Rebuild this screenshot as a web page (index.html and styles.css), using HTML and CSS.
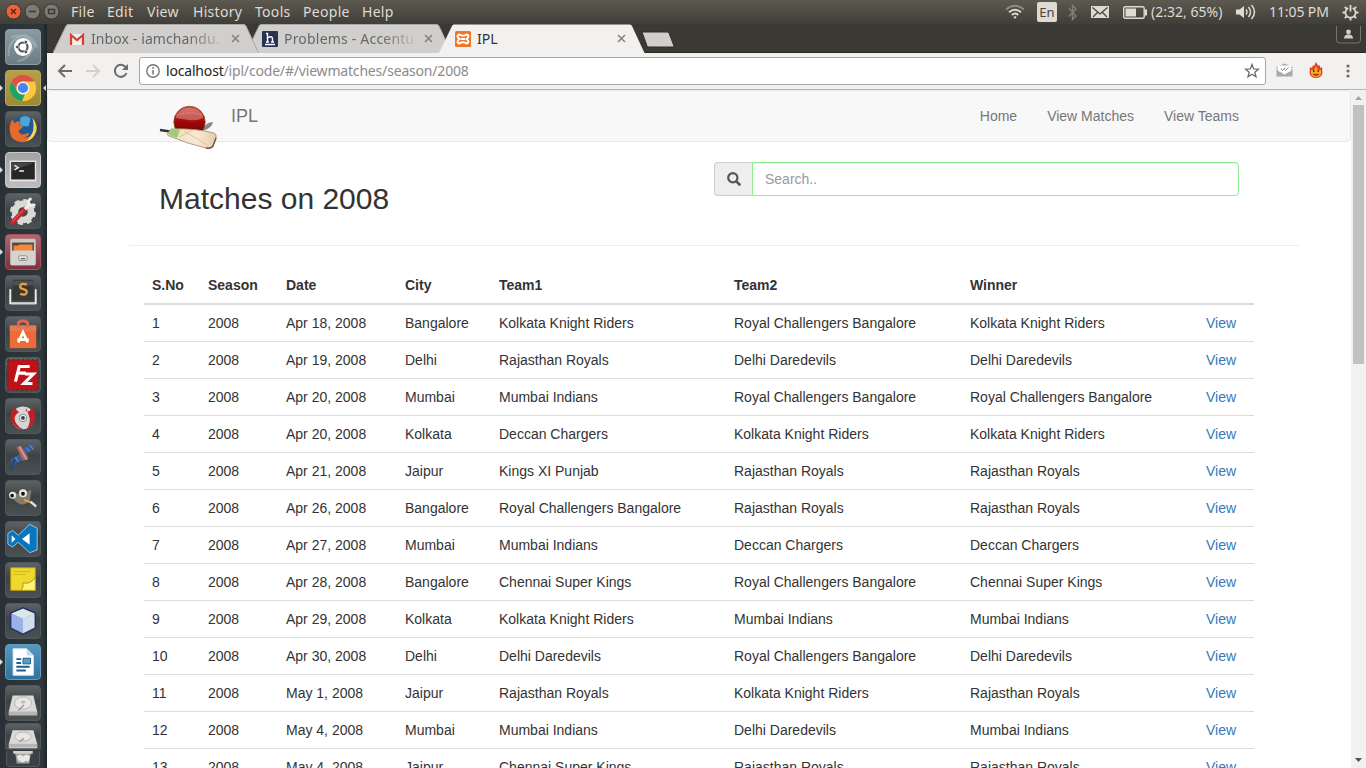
FILE: index.html
```html
<!DOCTYPE html>
<html lang="en">
<head>
<meta charset="utf-8">
<title>IPL</title>
<link rel="stylesheet" href="styles.css">
</head>
<body>
<div class="desktop">
<header class="panel">
  <div class="window-buttons">
    <svg width="62" height="24" viewBox="0 0 62 24"><circle cx="13.500" cy="11.500" r="7.500" fill="#ee6237" stroke="#3b3934"/><path d="M11 9l5 5m0-5l-5 5" stroke="#632713" stroke-width="1.500"/><g fill="#7d7a71" stroke="#3b3934"><circle cx="32.500" cy="11.500" r="7.500"/><circle cx="51.500" cy="11.500" r="7.500"/></g><path d="M29 11.500h7" stroke="#3b3934" stroke-width="1.500"/><path d="M48.500 9.500h6v4h-6z" fill="none" stroke="#3b3934" stroke-width="1.400"/></svg>
  </div>
  <nav class="menus"><span>File</span><span>Edit</span><span>View</span><span>History</span><span>Tools</span><span>People</span><span>Help</span></nav>
  <div class="indicators">
    <svg width="20" height="16" viewBox="0 0 20 16" fill="none" stroke-width="1.900"><path d="M1 5.500Q10-2 19 5.500" stroke="#8f8c84"/><path d="M4 8.300Q10 3 16 8.300M6.800 11Q10 8 13.200 11" stroke="#dfdbd2"/><path d="M8.300 13l1.700 2 1.700-2q-1.700-1.500-3.400 0z" fill="#dfdbd2" stroke="none"/></svg>
    <span class="lang">En</span>
    <svg class="bluetooth" width="10" height="17" viewBox="0 0 10 17" fill="none" stroke="#827f77" stroke-width="1.400"><path d="M1 4.500l7 7.500-3.500 3.500v-14L8 5l-7 7.500"/></svg>
    <svg width="18" height="14" viewBox="0 0 18 14"><path d="M0 1h18v12H0z" fill="#dfdbd2"/><path d="M1.500 2.500L9 9l7.500-6.500M2 12l5-5m9 5l-5-5" fill="none" stroke="#46443e" stroke-width="1.300"/></svg>
    <svg width="24" height="13" viewBox="0 0 24 13"><rect x=".7" y=".7" width="20.500" height="11.500" rx="1.500" fill="none" stroke="#dfdbd2" stroke-width="1.400"/><path d="M2.500 2.500H13v8H2.500zM22 3.500h2v6h-2z" fill="#dfdbd2"/></svg>
    <span class="battery-text">(2:32, 65%)</span>
    <svg width="20" height="16" viewBox="0 0 20 16"><path d="M0 5.500h3.500L8 2v12l-4.500-3.500H0z" fill="#dfdbd2"/><path d="M10 5.500q2 2.500 0 5M12.500 3q4 5 0 10M15.500 1q6 7 0 14" fill="none" stroke="#dfdbd2" stroke-width="1.500"/></svg>
    <span class="clock">11:05 PM</span>
    <svg width="17" height="17" viewBox="0 0 17 17" fill="none" stroke="#dfdbd2"><path d="M6.300 3.900a5.100 5.100 0 1 0 4.400 0" stroke-width="1.700"/><path d="M8.500 1v6.500" stroke-width="1.800"/><path d="M2.800 2.800l2 2m9.400-2l-2 2M.5 8.500h3m10 0h3M2.800 14.200l2-2m9.400 2l-2-2M8.500 13.500v3" stroke-width="1.800"/></svg>
  </div>
</header>
<div class="workspace">
<aside class="launcher">
  <div class="tile t-dash"><svg viewBox="0 0 36 36"><path d="M3 28Q1 10 20 5q10 4 13 14M5 8q15-7 25 8-5 15-18 17" fill="none" stroke="#b9c3c9" stroke-width="2" opacity=".45"/><circle cx="18" cy="18" r="9.500" fill="#fff"/><circle cx="18" cy="18" r="4.800" fill="none" stroke="#4b5155" stroke-width="2.200"/><g fill="#4b5155" stroke="#fff" stroke-width=".7"><circle cx="12" cy="18" r="1.900"/><circle cx="21" cy="12.800" r="1.900"/><circle cx="21" cy="23.200" r="1.900"/></g></svg></div>
  <div class="tile t-chrome run active"><svg viewBox="0 0 36 36"><circle cx="18" cy="18" r="14" fill="#fac83c"/><path d="M5.900 11A14 14 0 0 1 30.100 11H18a6.700 6.700 0 0 0-5.800 10z" fill="#dd5146"/><path d="M5.900 11L12.200 21.300A6.700 6.700 0 0 0 20 24.400L17 32A14 14 0 0 1 5.900 11z" fill="#20a263"/><circle cx="18" cy="18" r="6.200" fill="#4a85ed" stroke="#f3f0e4" stroke-width="1.600"/></svg></div>
  <div class="tile"><svg viewBox="0 0 36 36"><circle cx="19" cy="17" r="13" fill="#1c5997"/><path d="M15 6q7-4 11 1l-2 8-9 0z" fill="#52a4d6"/><path d="M29 9q5 9 0 16-4 7-12 7Q5 31 4 20q-1-7 3-12l2 4q3-3 6-2l-1 4 4 2-5 4q2 5 8 3l4-1q-2 5-7 5 9 1 11-7 1-5 0-11z" fill="#e9682b"/><path d="M28 6q8 10 2 19-3 5-9 6 6-5 8-12 1-6-1-13z" fill="#fbd55c"/></svg></div>
  <div class="tile t-light run"><svg viewBox="0 0 36 36"><path d="M4 8h28v22H4z" fill="#e5e5e3"/><path d="M5.500 9.500h25V28h-25z" fill="#252726"/><path d="M6 10h24L6 19z" fill="#454746"/><path d="M9 13l4 2.500L9 18M14 19h5" fill="none" stroke="#eee" stroke-width="1.500"/></svg></div>
  <div class="tile"><svg viewBox="0 0 36 36"><circle cx="18" cy="19" r="8.500" fill="none" stroke="#d9d9d7" stroke-width="7"/><circle cx="18" cy="19" r="12" fill="none" stroke="#d9d9d7" stroke-width="3.500" stroke-dasharray="5.300 4.100"/><path d="M7 30L20 16" stroke="#c5282c" stroke-width="5" stroke-linecap="round"/><path d="M7 29L18 17" stroke="#e4686a" stroke-width="1"/><path d="M20 16l6-6" stroke="#f1eeee" stroke-width="3.500"/><path d="M27 5q-4 1-3 5 2 4 7 1" fill="none" stroke="#f1eeee" stroke-width="3"/></svg></div>
  <div class="tile t-files run"><svg viewBox="0 0 36 36"><rect x="4.500" y="4" width="27" height="28" rx="2" fill="#c9c7c3"/><path d="M6.500 8h23v9h-23z" fill="#5a4638"/><path d="M8 11h5l1-1h14v7H8z" fill="#ee8b42"/><path d="M5 16.500h26V32H5z" fill="#d5d3cf"/><rect x="13.500" y="22" width="9" height="5" rx="1.500" fill="#eee" stroke="#8c8a87"/><path d="M15.500 25h5" stroke="#666" stroke-width="1.500"/></svg></div>
  <div class="tile"><svg viewBox="0 0 36 36"><path d="M4.500 14v15h27V14" fill="none" stroke="#eceeee" stroke-width="2"/><rect x="7" y="4" width="22" height="22" rx="1.500" fill="#353839"/><path d="M7 5h22v5H7z" fill="#4d5051"/><path d="M22 9q-7-2-7 2 0 2 3.500 3t3.500 3q0 4-7 2" fill="none" stroke="#ef9c3e" stroke-width="2.500"/><path d="M5 28h26v2H5z" fill="#d6d8d8"/></svg></div>
  <div class="tile"><svg viewBox="0 0 36 36"><path d="M4 9h28v24H4z" fill="#ef6b35"/><path d="M4 9h28v6H4z" fill="#e87852"/><path d="M13 11V6q5-4 10 0v5" fill="none" stroke="#d86a50" stroke-width="3"/><path d="M13 27l5-11 5 11M12 24h12" fill="none" stroke="#fff" stroke-width="2.800"/></svg></div>
  <div class="tile"><svg viewBox="0 0 36 36"><rect x="2" y="2" width="32" height="32" fill="#c01216"/><rect x="2" y="2" width="32" height="32" fill="none" stroke="#573034" stroke-width="2" stroke-dasharray="2 3"/><path d="M10 25l4-16h11M12 16h9M20 17h9L19 27h9" fill="none" stroke="#fff" stroke-width="3.300"/></svg></div>
  <div class="tile"><svg viewBox="0 0 36 36"><circle cx="18" cy="20" r="12" fill="#d7d4d4"/><path d="M18 3Q22 9 21 13l4 0q2-3 3-5 8 17-7 25 5-6 4-13-2-7-7-17zM10 8Q1 17 7 26q5 6 11 6-9-5-9-12 1-4 5-6-4-2-4-6z" fill="#bd2027"/><circle cx="18" cy="20" r="4" fill="#eee" stroke="#858585"/><circle cx="18" cy="20" r="2" fill="#334043"/></svg></div>
  <div class="tile"><svg viewBox="0 0 36 36"><path d="M17 10l10-6 4 4-11 8zM5 20l10-5 4 6-8 3-5 8z" fill="#365f9f"/><path d="M21 8l4 4m0-7l4 5M10 18l3 5" stroke="#78a2d1"/><path d="M11 8l5-2 8 13-6 3z" fill="#a9645e"/><path d="M14 7l8 14" stroke="#d09a90" stroke-width="2"/><path d="M5 32l4-11" stroke="#294675" stroke-width="3"/></svg></div>
  <div class="tile"><svg viewBox="0 0 36 36"><path d="M6 12q8 3 13 1l8-4-2 13q-8 5-13 1-6-4-6-11z" fill="#807b6e"/><g fill="#e8e8e5"><circle cx="7" cy="15" r="3.700"/><circle cx="18" cy="13" r="4.200"/></g><g fill="#111"><circle cx="6.500" cy="15.500" r="1.900"/><circle cx="18" cy="13.500" r="2"/></g><path d="M19 20l8 3" stroke="#ef9c3d" stroke-width="2"/><path d="M26 22l6 5" stroke="#ddd" stroke-width="2.500"/></svg></div>
  <div class="tile"><svg viewBox="0 0 36 36"><path d="M25 2.500l8 4v23l-8 3-12-11-6 5-5-3V12l5-3 6 5z" fill="#0876bd" stroke="#a6c9df"/><path d="M6 14v8l4-4zM25 12l-8 6 8 6z" fill="#fff"/></svg></div>
  <div class="tile"><svg viewBox="0 0 36 36"><path d="M5 5h26v24H5z" fill="#f0d82c" stroke="#b89d12"/><path d="M8 9h18M8 12h13" stroke="#cbb722"/><path d="M31 15v14H16q3-4 2-8 8 2 13-6z" fill="#fff479" stroke="#ad9418"/></svg></div>
  <div class="tile"><svg viewBox="0 0 36 36"><path d="M18 4l13 5.500v16L18 32 5 25.500v-16z" fill="#8a9acd" stroke="#273269" stroke-width="1.600"/><path d="M18 5l12 5-12 6-12-6z" fill="#d9e9e8"/><path d="M6 10l12 6v15L6 25z" fill="#9cb2e6"/><path d="M18 16l12-6v15l-12 6z" fill="#d0dfec"/></svg></div>
  <div class="tile t-writer run"><svg viewBox="0 0 36 36"><path d="M7.500 4H22l7 7v21H7.500z" fill="#fff" stroke="#d8e7ef"/><path d="M22 4v7h7z" fill="#c1d8e5"/><path d="M11 15h5M11 19h5M11 23h14M11 27h10" stroke="#175f8f" stroke-width="2"/><path d="M18 14h8v6h-8z" fill="#5e9bc0" stroke="#175f8f"/></svg></div>
  <div class="tile"><svg viewBox="0 0 36 36"><path d="M7 10h22l4 17v4H3v-4z" fill="#d9d9d7"/><path d="M3 27h30v4H3z" fill="#b5b5b3"/><ellipse cx="18" cy="18" rx="9" ry="6.500" fill="#e7e7e5" stroke="#b4b4b2"/><ellipse cx="18" cy="17" rx="2.500" ry="1.500" fill="#bcbcba"/><path d="M13 26l6-6" stroke="#999" stroke-width="1.500"/></svg></div>
  <div class="tile folded"><svg viewBox="0 0 36 30" preserveAspectRatio="none"><path d="M7 7h22l4 15v5H3v-5z" fill="#d9d9d7"/><path d="M3 22h30v4H3z" fill="#b5b5b3"/><ellipse cx="18" cy="14" rx="8.500" ry="5" fill="#e7e7e5" stroke="#b4b4b2"/><path d="M14 20l5-4" stroke="#999" stroke-width="1.500"/></svg></div>
  <div class="tile trash"><svg viewBox="0 0 36 18"><path d="M9 1h18l-2 13H11z" fill="#a3a5a4"/><path d="M7 0h22v3H7z" fill="#d1d2d0"/><path d="M11 6l4-2 3 2 4-2 4 2-2 6-3-1-3 2-5-2z" fill="#e8e8e6"/></svg></div>
</aside>
<main class="browser">
  <div class="tabs">
    <div class="tab first"><svg class="shape" viewBox="0 0 206 29"><path d="M0 29L13 2q.7-1.500 2-1.500h176q1.300 0 2 1.500l12.500 27" fill="#d0cfcd" stroke="#aaa8a5"/></svg>
      <svg class="fav" viewBox="0 0 16 16"><path d="M1 3h14v11H1z" fill="#eee"/><path d="M2 14V4l6 5 6-5v10" fill="none" stroke="#d93e35" stroke-width="2.200"/></svg><span class="tab-title fade">Inbox - iamchandu.</span><svg class="close" viewBox="0 0 9 9"><path d="M1 1l7 7m0-7L1 8"/></svg></div>
    <div class="tab second"><svg class="shape" viewBox="0 0 206 29"><path d="M0 29L13 2q.7-1.500 2-1.500h176q1.300 0 2 1.500l12.500 27" fill="#d0cfcd" stroke="#aaa8a5"/></svg>
      <svg class="fav" viewBox="0 0 16 16"><rect width="16" height="16" rx="1" fill="#2a3151"/><path d="M5.500 2v9M5.500 7q5-3 5 1v3M4 2.500h2M4 11h3m2 0h3M3 13.500h10" fill="none" stroke="#fff" stroke-width="1.400"/></svg><span class="tab-title fade">Problems - Accentu</span><svg class="close" viewBox="0 0 9 9"><path d="M1 1l7 7m0-7L1 8"/></svg></div>
    <div class="tab current"><svg class="shape" viewBox="0 0 206 29"><path d="M0 29L13 2q.7-1.500 2-1.500h176q1.300 0 2 1.500l12.500 27" fill="#f2f1f0"/></svg>
      <svg class="fav" viewBox="0 0 16 16"><rect width="16" height="16" rx="1.500" fill="#ef7628"/><path d="M4.500 3.500Q8 6 11.500 3.500q4 1 0 4.500 4 3.500 0 4.500Q8 10 4.500 12.500q-4-1 0-4.500-4-3.500 0-4.500zM6 8h4" fill="none" stroke="#fff" stroke-width="2"/></svg><span class="tab-title">IPL</span><svg class="close" viewBox="0 0 9 9"><path d="M1 1l7 7m0-7L1 8"/></svg></div>
    <svg class="newtab" width="34" height="17" viewBox="0 0 34 17"><path d="M1 1h25q1.500 0 2 1l5 13q0 1-1 1H8q-1.500 0-2-1z" fill="#d0cfcd" stroke="#2e2c29"/></svg>
    <svg class="profile" width="25" height="19" viewBox="0 0 25 19"><path d="M.5 0v14q0 3 3 3h18q3 0 3-3V0" fill="#3b3934" stroke="#77746d"/><circle cx="12.500" cy="6" r="2.400" fill="#d0cdc6"/><path d="M8 12.500q0-4 4.500-4t4.500 4z" fill="#d0cdc6"/></svg>
  </div>
  <div class="toolbar">
    <svg class="back" width="16" height="16" viewBox="0 0 16 16"><path d="M15 8H2m6-6L2 8l6 6"/></svg>
    <svg class="forward" width="16" height="16" viewBox="0 0 16 16"><path d="M1 8h13M8 2l6 6-6 6"/></svg>
    <svg class="reload" width="16" height="16" viewBox="0 0 16 16"><path d="M13.500 10A6 6 0 1 1 12.500 4"/><path d="M15 1v6H9z" class="solid"/></svg>
    <div class="omnibox">
      <svg width="14" height="14" viewBox="0 0 14 14"><circle cx="7" cy="7" r="6.200" fill="none" stroke="#757575" stroke-width="1.400"/><path d="M7 6v4.500M7 3v1.700" stroke="#757575" stroke-width="1.500"/></svg>
      <span class="url"><b>localhost</b>/ipl/code/#/viewmatches/season/2008</span>
      <svg class="star" width="16" height="16" viewBox="0 0 16 16"><path d="M8 1.500l1.700 4.400 4.800.3-3.700 3 1.200 4.600L8 11.200l-4 2.600 1.200-4.600-3.700-3 4.800-.3z" fill="none" stroke="#6c6c6c" stroke-width="1.300"/></svg>
    </div>
    <svg class="mailext" width="17" height="15" viewBox="0 0 17 15"><path d="M.5 4L8.500.5l8 3.500v9.500H.5z" fill="#a9a9a7"/><path d="M2 2.500h13V8l-6.500 3L2 8z" fill="#fff"/><path d="M.8 5l7.700 6 7.700-6" fill="none" stroke="#f7f7f7" stroke-width="1.200"/><path d="M5 5.500l1.500 2 3-3M8.500 6.500l1 1 3-3" fill="none" stroke="#888"/></svg>
    <svg class="flame" width="14" height="17" viewBox="0 0 14 17"><path d="M7 0l2.500 4L11 3v3l2-1 .5 6Q12.500 16 7 16T.5 11L1 5l2 1 1-3 1 1z" fill="#e64524"/><path d="M7 4l2 4 3 0q1 7-5 7T2 8l3 0z" fill="#f7a823"/><path d="M4.800 8v2m4.400-2v2M4.500 12q2.500 2 5 0" fill="none" stroke="#5b210e" stroke-width="1.300"/></svg>
    <svg class="dots" width="4" height="14" viewBox="0 0 4 14" fill="#6c6c6c"><circle cx="2" cy="2" r="1.600"/><circle cx="2" cy="7" r="1.600"/><circle cx="2" cy="12" r="1.600"/></svg>
  </div>
  <div class="viewport">
    <div class="page">
      <nav class="navbar">
        <svg class="logo" width="60" height="48" viewBox="0 0 60 48">
          <defs><linearGradient id="ball" x2="0" y2="1"><stop stop-color="#c6403a"/><stop offset=".5" stop-color="#a00808"/><stop offset="1" stop-color="#600000"/></linearGradient><linearGradient id="bat"><stop stop-color="#efddb5"/><stop offset=".6" stop-color="#fae8d6"/><stop offset="1" stop-color="#e6ccaa"/></linearGradient></defs>
          <path d="M43 26q4-8 11-8-1 6-10 9z" fill="#888"/><circle cx="30.500" cy="18" r="15.700" fill="url(#ball)" stroke="#8b4a23" stroke-width=".8"/><path d="M16.500 14Q19 4 30.500 3.500 42 4 44.500 14 38 17 30 16t-13.500-2z" fill="#f0b1a8" opacity=".45"/><path d="M18 11q12-4 25 0" stroke="#efc7c1" stroke-width=".7" stroke-dasharray="1 2" fill="none"/>
          <path d="M1 26l10 1.500" stroke="#343434" stroke-width="2.600"/><path d="M12 25q24-1 43 4 3 1 2 5l-3 8q-2 3-7 2-18-4-37-12-3-1-1-3z" fill="url(#bat)" stroke="#a08a68" stroke-width=".8"/><path d="M12 25l9 1-3 8-8-3q-1-3 2-6z" fill="#9bce77"/><path d="M25 27l23 14M20 33q8-4 14-7" stroke="#cbbd81" stroke-width=".8" fill="none"/><path d="M57 34l-3 8q-2 3-7 2" fill="none" stroke="#76573c" stroke-width="1.500"/>
        </svg>
        <a class="brand">IPL</a>
        <div class="links"><a>Home</a><a>View Matches</a><a>View Teams</a></div>
      </nav>
      <section class="title-row"><h2>Matches on 2008</h2>
        <div class="search"><span class="addon"><svg width="14" height="14" viewBox="0 0 14 14"><circle cx="5.800" cy="5.800" r="4.600" fill="none" stroke="#555" stroke-width="2.200"/><path d="M9.300 9.300l3.200 3.200" stroke="#555" stroke-width="2.600" stroke-linecap="round"/></svg></span><input type="text" placeholder="Search.."></div>
      </section>
      <table class="matches">
        <colgroup><col class="c-no"><col class="c-season"><col class="c-date"><col class="c-city"><col class="c-team1"><col class="c-team"><col class="c-team"><col class="c-view"></colgroup>
        <thead><tr><th>S.No</th><th>Season</th><th>Date</th><th>City</th><th>Team1</th><th>Team2</th><th>Winner</th><th></th></tr></thead>
        <tbody>
        <tr><td>1</td><td>2008</td><td>Apr 18, 2008</td><td>Bangalore</td><td>Kolkata Knight Riders</td><td>Royal Challengers Bangalore</td><td>Kolkata Knight Riders</td><td><a>View</a></td></tr>
        <tr><td>2</td><td>2008</td><td>Apr 19, 2008</td><td>Delhi</td><td>Rajasthan Royals</td><td>Delhi Daredevils</td><td>Delhi Daredevils</td><td><a>View</a></td></tr>
        <tr><td>3</td><td>2008</td><td>Apr 20, 2008</td><td>Mumbai</td><td>Mumbai Indians</td><td>Royal Challengers Bangalore</td><td>Royal Challengers Bangalore</td><td><a>View</a></td></tr>
        <tr><td>4</td><td>2008</td><td>Apr 20, 2008</td><td>Kolkata</td><td>Deccan Chargers</td><td>Kolkata Knight Riders</td><td>Kolkata Knight Riders</td><td><a>View</a></td></tr>
        <tr><td>5</td><td>2008</td><td>Apr 21, 2008</td><td>Jaipur</td><td>Kings XI Punjab</td><td>Rajasthan Royals</td><td>Rajasthan Royals</td><td><a>View</a></td></tr>
        <tr><td>6</td><td>2008</td><td>Apr 26, 2008</td><td>Bangalore</td><td>Royal Challengers Bangalore</td><td>Rajasthan Royals</td><td>Rajasthan Royals</td><td><a>View</a></td></tr>
        <tr><td>7</td><td>2008</td><td>Apr 27, 2008</td><td>Mumbai</td><td>Mumbai Indians</td><td>Deccan Chargers</td><td>Deccan Chargers</td><td><a>View</a></td></tr>
        <tr><td>8</td><td>2008</td><td>Apr 28, 2008</td><td>Bangalore</td><td>Chennai Super Kings</td><td>Royal Challengers Bangalore</td><td>Chennai Super Kings</td><td><a>View</a></td></tr>
        <tr><td>9</td><td>2008</td><td>Apr 29, 2008</td><td>Kolkata</td><td>Kolkata Knight Riders</td><td>Mumbai Indians</td><td>Mumbai Indians</td><td><a>View</a></td></tr>
        <tr><td>10</td><td>2008</td><td>Apr 30, 2008</td><td>Delhi</td><td>Delhi Daredevils</td><td>Royal Challengers Bangalore</td><td>Delhi Daredevils</td><td><a>View</a></td></tr>
        <tr><td>11</td><td>2008</td><td>May 1, 2008</td><td>Jaipur</td><td>Rajasthan Royals</td><td>Kolkata Knight Riders</td><td>Rajasthan Royals</td><td><a>View</a></td></tr>
        <tr><td>12</td><td>2008</td><td>May 4, 2008</td><td>Mumbai</td><td>Mumbai Indians</td><td>Delhi Daredevils</td><td>Mumbai Indians</td><td><a>View</a></td></tr>
        <tr><td>13</td><td>2008</td><td>May 4, 2008</td><td>Jaipur</td><td>Chennai Super Kings</td><td>Rajasthan Royals</td><td>Rajasthan Royals</td><td><a>View</a></td></tr>
        </tbody>
      </table>
    </div>
    <div class="scrollbar"><svg width="15" height="15" viewBox="0 0 15 15"><path d="M4 10l3.500-4L11 10z" fill="#a3a3a3"/></svg><div class="thumb"></div><svg class="down" width="15" height="15" viewBox="0 0 15 15"><path d="M4 5l3.500 4L11 5z" fill="#505050"/></svg></div>
  </div>
</main>
</div>
</div>
</body>
</html>
```
FILE: styles.css
```css
* { box-sizing: border-box; }
body { margin: 0; overflow: hidden; font-family: "Liberation Sans", Arial, sans-serif; font-size: 14px; line-height: 20px; color: #333; }
svg { display: block; flex: none; }
.desktop { width: 1366px; height: 768px; display: flex; flex-direction: column; overflow: hidden; background: #fff; }
.panel { height: 24px; flex: none; display: flex; background: linear-gradient(#5c5950, #403e39); color: #dfdbd2; font-family: "Noto Sans", sans-serif; font-size: 14px; line-height: 24px; white-space: nowrap; }
.window-buttons { width: 71px; flex: none; }
.menus { display: grid; grid-template-columns: 36px 40px 46px 62px 48px 59px 40px; flex: 1; letter-spacing: .3px; }
.indicators { display: grid; grid-template-columns: 32px 32px 22px 32px 28px 85px 33px 73px 24px; align-items: center; }
.lang { width: 20px; height: 20px; background: #dfdbd2; color: #46443e; border-radius: 2px; font-size: 13px; line-height: 20px; text-align: center; }
.bluetooth { margin-left: -1px; }
.battery-text { letter-spacing: .02px; }
.clock { letter-spacing: -.1px; }
.workspace { flex: 1; min-height: 0; display: flex; }

.launcher { width: 47px; flex: none; padding: 5px 0 0 5px; background: linear-gradient(90deg, #293136, #2e373b 90%, #1f2527); display: flex; flex-direction: column; gap: 5px; overflow: hidden; }
.tile { width: 36px; height: 36px; flex: none; position: relative; border-radius: 4px; border: 1px solid #50585b; background: linear-gradient(#5d6264, #3d4244 45%, #4b5052); }
.tile svg { width: 34px; height: 34px; }
.t-dash { background: linear-gradient(#8b9ba4, #6d7d86); border-color: #8d9ba3; }
.t-chrome { background: linear-gradient(#b79f4d, #9d8a35); border-color: #bba95b; }
.t-light { background: linear-gradient(#a3a3a3, #bdbdbd); border-color: #c9c9c9; }
.t-files { background: linear-gradient(#ac6a72, #80303c); border-color: #a8505b; }
.t-writer { background: linear-gradient(#5698c2, #2d749f); border-color: #659dbd; }
.run::before { content: ""; position: absolute; left: -6px; top: 14px; border: 3px solid transparent; border-left-color: #d8dcdd; border-right: 0; }
.active::after { content: ""; position: absolute; right: -6px; top: 14px; border: 3px solid transparent; border-right-color: #d8dcdd; border-left: 0; }
.folded { height: 28px; margin-top: -3px; border-bottom-color: #353c3f; }
.folded svg { height: 27px; }
.trash { width: 34px; height: 16px; margin: -5px 0 0 1px; border-radius: 0 0 4px 4px; border-top: 0; background: #3b4042; }
.trash svg { width: 32px; height: 16px; }

.browser { flex: 1; min-width: 0; display: flex; flex-direction: column; }
.tabs { height: 29px; flex: none; padding-left: 6px; display: flex; background: #3b3934; border-bottom: 1px solid #2b2927; font-family: "Noto Sans", sans-serif; font-size: 14px; }
.tab { width: 206px; height: 29px; margin-right: -13px; padding: 0 14px 0 16px; flex: none; position: relative; isolation: isolate; display: flex; align-items: center; color: #666; }
.first { z-index: 2; }
.second { z-index: 1; }
.current { z-index: 3; color: #333; margin-right: 0; }
.shape { position: absolute; left: 0; top: 0; width: 206px; height: 29px; z-index: -1; }
.fav { width: 16px; height: 16px; margin-right: 6px; }
.tab-title { width: 129px; margin-right: 11px; overflow: hidden; white-space: nowrap; }
.fade { -webkit-mask-image: linear-gradient(90deg, #000 98px, transparent 135px); mask-image: linear-gradient(90deg, #000 98px, transparent 135px); }
.first .tab-title { letter-spacing: .1px; }
.second .tab-title { letter-spacing: .2px; }
.close { width: 9px; height: 9px; fill: none; stroke: #858381; stroke-width: 1.6; }
.newtab { margin: 7px 0 0 -4px; }
.profile { margin: 2px 5px 0 auto; }
.toolbar { height: 37px; flex: none; display: flex; align-items: center; padding: 0 16px 1px 10px; background: #f2f1f0; border-bottom: 1px solid #b4b2b6; }
.back, .forward, .reload { fill: none; stroke: #6c6c6c; stroke-width: 2; margin-right: 12px; }
.forward { stroke: #d2d1d0; }
.reload { margin-right: 10px; }
.reload .solid { fill: #6c6c6c; stroke: none; }
.omnibox { width: 1127px; height: 28px; display: flex; align-items: center; padding: 0 5px 0 6px; background: #fff; border: 1px solid #a9a7a5; border-radius: 3px; font-family: "Noto Sans", sans-serif; }
.url { margin-left: 6px; color: #8b8b8b; letter-spacing: -.18px; white-space: nowrap; }
.url b { font-weight: 400; color: #222; }
.star { margin-left: auto; }
.mailext { margin-left: 10px; }
.flame { margin-left: 16px; }
.dots { margin-left: auto; }

.viewport { flex: 1; min-height: 0; display: flex; }
.page { width: 1304px; overflow: hidden; background: #fff; }
.navbar { height: 52px; padding-left: 111px; display: flex; background: #f8f8f8; border: 1px solid #e7e7e7; border-radius: 4px; color: #777; }
.logo { margin-top: 13px; }
.brand { margin-left: 12px; font-size: 18px; line-height: 50px; }
.links { margin: 0 111px 0 auto; display: flex; gap: 30px; line-height: 50px; }
.title-row { width: 1170px; height: 104px; margin-left: 82px; padding: 20px 60px 0 30px; display: flex; justify-content: space-between; border-bottom: 1px solid #eee; }
h2 { margin: 20px 0 0; font-size: 30px; line-height: 33px; font-weight: 400; }
.search { width: 525px; height: 34px; display: flex; }
.addon { width: 38px; background: #eee; border: 1px solid #ccc; border-right: 0; border-radius: 4px 0 0 4px; display: flex; align-items: center; padding-left: 12px; }
.search input { flex: 1; border: 1px solid lightgreen; border-radius: 0 4px 4px 0; padding: 6px 12px; box-shadow: inset 0 1px 1px rgba(0,0,0,.075); font: 14px/20px "Liberation Sans", Arial, sans-serif; outline: 0; }
.search input::placeholder { color: #999; opacity: 1; }
.matches { width: 1110px; margin: 21px 0 0 97px; table-layout: fixed; border-spacing: 0; }
.c-no, .c-view { width: 56px; }
.c-season { width: 78px; }
.c-date { width: 119px; }
.c-city { width: 94px; }
.c-team1 { width: 235px; }
.c-team { width: 236px; }
th, td { padding: 8px; text-align: left; line-height: 20px; border-bottom: 1px solid #ddd; white-space: nowrap; }
th { border-bottom-width: 2px; }
td a { color: #337ab7; }
.scrollbar { width: 15px; background: #f1f1f1; display: flex; flex-direction: column; align-items: center; }
.thumb { width: 11px; height: 259px; background: #c1c1c1; }
.down { margin-top: auto; }
```
